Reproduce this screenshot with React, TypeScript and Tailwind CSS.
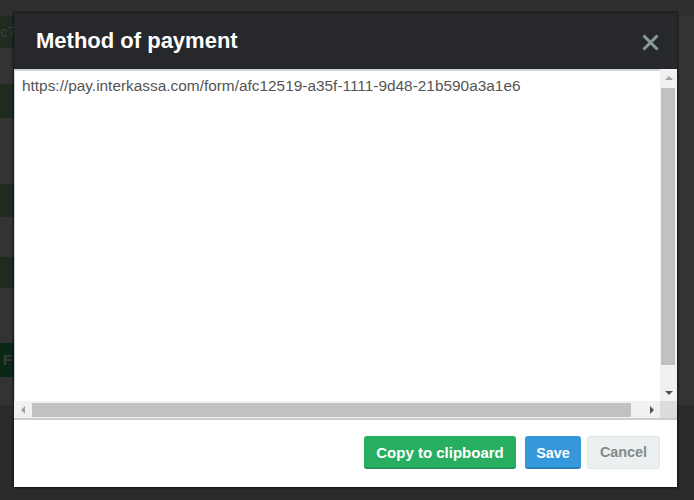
import React from "react";

const font = { fontFamily: '"Liberation Sans", Arial, sans-serif' };

function Tri({ dir, color }: { dir: "up" | "down" | "left" | "right"; color: string }) {
  if (dir === "up")
    return (
      <svg width="8" height="4" viewBox="0 0 8 4">
        <polygon points="0,4 8,4 4,0" fill={color} />
      </svg>
    );
  if (dir === "down")
    return (
      <svg width="8" height="4" viewBox="0 0 8 4">
        <polygon points="0,0 8,0 4,4" fill={color} />
      </svg>
    );
  if (dir === "left")
    return (
      <svg width="4" height="8" viewBox="0 0 4 8">
        <polygon points="4,0 4,8 0,4" fill={color} />
      </svg>
    );
  return (
    <svg width="4" height="8" viewBox="0 0 4 8">
      <polygon points="0,0 0,8 4,4" fill={color} />
    </svg>
  );
}

export default function App() {
  return (
    <div className="relative h-[500px] w-[694px] overflow-hidden" style={font}>
      {/* background page (dimmed) */}
      <div className="flex h-full w-full flex-col">
        <div className="h-[16px] bg-[#2f2f2f]" />
        <div className="flex flex-1 flex-col bg-[#333333]">
          <div className="flex h-[32px] w-[14px] items-center justify-end overflow-hidden bg-[#1f2b1f] text-[15px] text-[#3d3d3d]">
            <span className="-mr-[2px] whitespace-nowrap">c7</span>
          </div>
          <div className="mt-[36px] h-[34px] w-[14px] bg-[#1f2b1f]" />
          <div className="mt-[66px] h-[33px] w-[14px] bg-[#1f2b1f]" />
          <div className="mt-[40px] h-[31px] w-[14px] bg-[#1f2b1f]" />
          <div className="mt-[55px] flex h-[34px] w-[14px] items-center justify-end overflow-hidden bg-[#0d2717] text-[15px] font-bold text-[#3a3a3a]">
            <span className="mr-[2px]">F</span>
          </div>
        </div>
        <div className="h-[95px] bg-[#2b2b2b]" />
      </div>

      {/* modal */}
      <div className="absolute left-[14px] top-[13px] flex h-[474px] w-[663px] flex-col bg-white shadow-[0_0_2px_1px_rgba(0,0,0,0.6)]">
        <div className="flex h-[56px] items-center justify-between bg-[#26282c] pl-[22px] pr-[18px]">
          <span className="text-[22px] font-bold leading-none text-white">Method of payment</span>
          <svg width="17" height="17" viewBox="0 0 17 17" className="mt-[2px]">
            <line x1="1.5" y1="1.5" x2="15.5" y2="15.5" stroke="#8a9896" strokeWidth="3" />
            <line x1="15.5" y1="1.5" x2="1.5" y2="15.5" stroke="#8a9896" strokeWidth="3" />
          </svg>
        </div>

        {/* textarea */}
        <div className="flex h-[351px] flex-col">
          <div className="flex min-h-0 flex-1">
            <div className="flex-1 overflow-hidden border-l border-t-2 border-[#cdd3d8] bg-white pl-[7px] pt-[6px] text-[15.4px] leading-[17px] text-[#555555] whitespace-nowrap">
              https://pay.interkassa.com/form/afc12519-a35f-1111-9d48-21b590a3a1e6
            </div>
            <div className="flex w-[17px] flex-col bg-[#f1f1f1]">
              <div className="flex h-[17px] items-center justify-center">
                <Tri dir="up" color="#a3a3a3" />
              </div>
              <div className="flex-1 pl-[1px] pt-[2px]">
                <div className="h-[277px] w-[14px] bg-[#c1c1c1]" />
              </div>
              <div className="flex h-[17px] items-center justify-center">
                <Tri dir="down" color="#505050" />
              </div>
            </div>
          </div>
          <div className="flex h-[17px]">
            <div className="flex flex-1 items-center bg-[#f1f1f1]">
              <div className="flex h-[17px] w-[17px] items-center justify-center">
                <Tri dir="left" color="#a3a3a3" />
              </div>
              <div className="ml-[1px] h-[14px] w-[599px] bg-[#c1c1c1]" />
              <div className="flex-1" />
              <div className="flex h-[17px] w-[17px] items-center justify-center">
                <Tri dir="right" color="#505050" />
              </div>
            </div>
            <div className="w-[17px] bg-[#dcdcdc]" />
          </div>
          <div className="h-[2px] bg-[#c8ced3]" />
        </div>

        {/* footer */}
        <div className="flex flex-1 items-start justify-end pr-[17px] pt-[16px]">
          <div className="flex h-[33px] w-[152px] items-center justify-center rounded-[3px] border-b-2 border-[#21955a] bg-[#27ae60] pt-[4px] text-[15px] font-bold text-white">
            Copy to clipboard
          </div>
          <div className="ml-[9px] flex h-[33px] w-[56px] items-center justify-center rounded-[3px] border-b-2 border-[#2a80b9] bg-[#3498db] pt-[4px] text-[14.4px] font-bold text-white">
            Save
          </div>
          <div className="ml-[6px] flex h-[33px] w-[73px] items-center justify-center rounded-[3px] border border-[#e0e5e6] bg-[#ecf0f1] text-[14.4px] font-bold text-[#7f8c8d]">
            Cancel
          </div>
        </div>
      </div>
    </div>
  );
}
